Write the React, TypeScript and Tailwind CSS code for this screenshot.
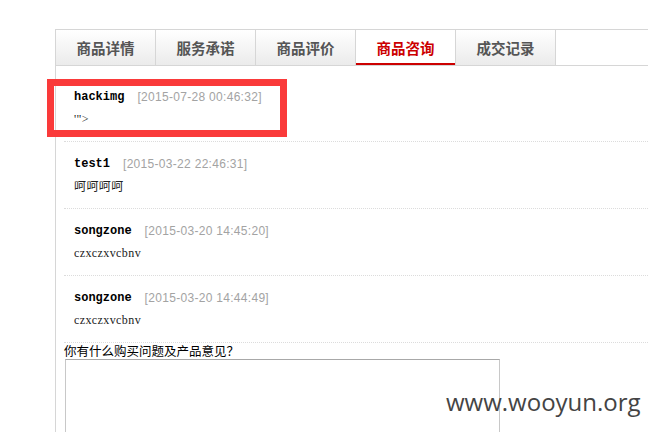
import React from "react";

const tabs = ["商品详情", "服务承诺", "商品评价", "商品咨询", "成交记录"];

const items = [
  { name: "hackimg", date: "[2015-07-28 00:46:32]", text: "'\">", cjk: false },
  { name: "test1", date: "[2015-03-22 22:46:31]", text: "呵呵呵呵", cjk: true },
  { name: "songzone", date: "[2015-03-20 14:45:20]", text: "czxczxvcbnv", cjk: false },
  { name: "songzone", date: "[2015-03-20 14:44:49]", text: "czxczxvcbnv", cjk: false },
];

export default function App() {
  return (
    <div className="relative w-[648px] h-[432px] bg-white overflow-hidden">
      <div className="ml-[55px] mt-[29px] h-[403px] border-l border-t border-[#d6d6d6]">
        <div className="flex h-[36px] border-b border-[#d6d6d6]">
          {tabs.map((t, i) => {
            const active = i === 3;
            return (
              <div
                key={t}
                className={
                  "w-[100px] h-full flex items-center justify-center border-r border-[#d6d6d6] text-[14.5px] font-bold " +
                  (active
                    ? "bg-white text-[#cc0000] shadow-[inset_0_-2px_0_#cc0000]"
                    : "bg-gradient-to-b from-[#ffffff] to-[#ebebeb] text-[#555555]")
                }
                style={{ fontFamily: '"Noto Sans CJK SC", sans-serif' }}
              >
                {t}
              </div>
            );
          })}
        </div>
        <div className="pl-[8px] pt-[9px]">
          {items.map((it, i) => (
            <div key={i} className="border-b border-dotted border-[#dcdcdc] pl-[10px] pt-[11px] pb-[11px]">
              <div className="h-[22px] flex items-center">
                <span
                  className="text-[12px] font-bold text-black"
                  style={{ fontFamily: '"Liberation Mono", monospace' }}
                >
                  {it.name}
                </span>
                <span
                  className="ml-[13px] text-[12px] text-[#a3a3a3] tracking-[0.3px]"
                  style={{ fontFamily: '"Liberation Sans", sans-serif' }}
                >
                  {it.date}
                </span>
              </div>
              <div
                className="h-[22px] flex items-center text-[12px] text-[#222222] tracking-[0.4px]"
                style={{
                  fontFamily: it.cjk
                    ? '"Noto Sans CJK SC", sans-serif'
                    : '"Liberation Serif", "Noto Sans CJK SC", serif',
                }}
              >
                {it.text}
              </div>
            </div>
          ))}
          <div
            className="h-[16px] flex items-center text-[12.5px] text-black leading-none"
            style={{ fontFamily: '"Noto Sans CJK SC", sans-serif' }}
          >
            你有什么购买问题及产品意见？
          </div>
          <div className="ml-[1px] w-[435px] h-[120px] border border-[#c8c8c8] border-t-[#a8a8a8] bg-white" />
        </div>
      </div>

      <div className="absolute left-[47px] top-[79px] w-[240px] h-[58px] border-[7px] border-[#fa3a3a]" />

      <div
        className="absolute left-[446px] top-[390px] text-[24px] text-[#444444] leading-none"
        style={{ fontFamily: '"Open Sans", sans-serif' }}
      >
        www.wooyun.org
      </div>
    </div>
  );
}
